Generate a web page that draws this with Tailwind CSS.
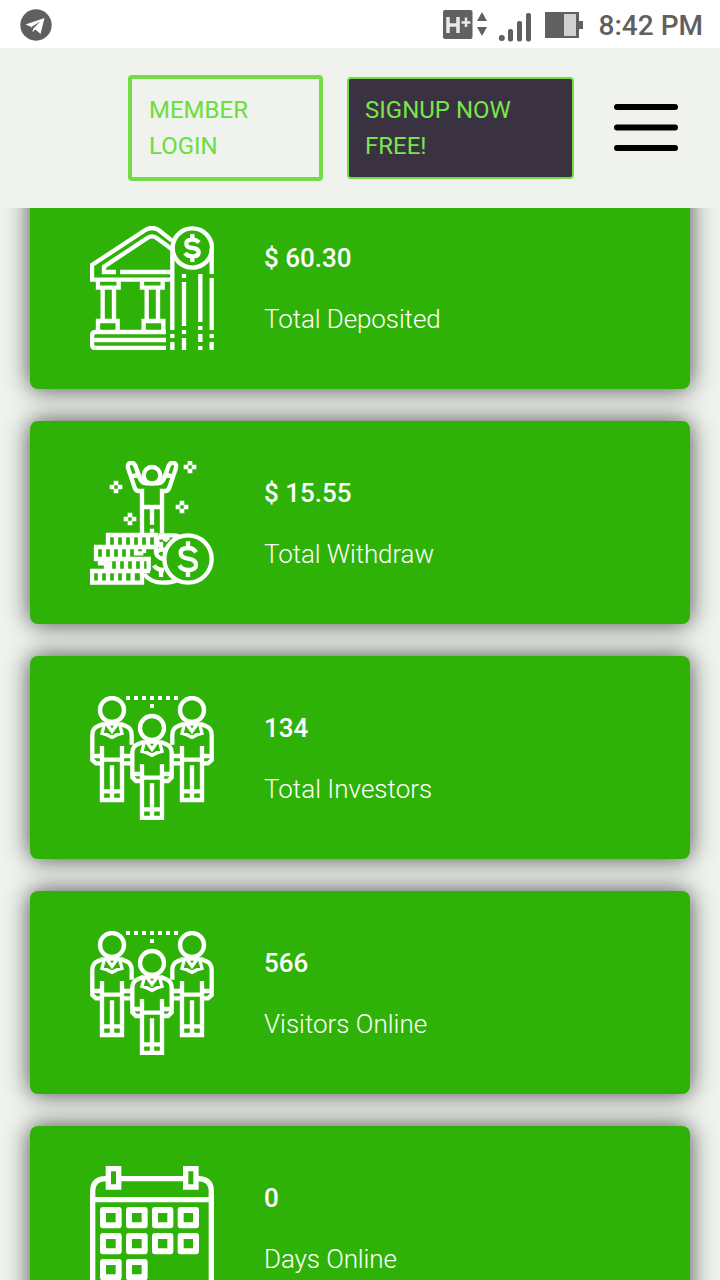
<!DOCTYPE html>
<html lang="en">
<head>
    <meta charset="UTF-8">
    <meta name="viewport" content="width=device-width, initial-scale=1.0">
    <title>Statistics</title>
    <script src="https://cdn.jsdelivr.net/npm/@tailwindcss/browser@4"></script>
</head>
<body class="bg-[#eff2ed] font-['Roboto',sans-serif] h-[1280px] overflow-hidden flex flex-col">
    <!-- Shared icon -->
    <svg class="hidden">
        <symbol id="people" viewBox="30 30 372 372">
            <g fill="none" stroke="#fff" stroke-width="13">
                <g>
                    <circle cx="96" cy="72" r="36"/>
                    <path d="M72 113 53 121Q37 128 37 146V222L48 232H66M120 113 139 121Q155 128 155 146V176M36 210H66M66 180V342H126V180M66 221H126M96 238V312M66 316H126M96 316V342M126 210H156M126 232H152"/>
                    <path stroke-width="10" d="M74 112 66 142 80 146 96 154 112 146 126 142 118 112M80 114 96 136 112 114Z"/>
                </g>
                <g>
                    <circle cx="336" cy="72" r="36"/>
                    <path d="M312 113 293 121Q277 128 277 146V176M360 113 379 121Q395 128 395 146V222L384 232H366M366 210H396M306 180V342H366V180M306 221H366M336 238V312M306 316H366M336 316V342M276 210H306M280 232H306"/>
                    <path stroke-width="10" d="M314 112 306 142 320 146 336 154 352 146 366 142 358 112M320 114 336 136 352 114Z"/>
                </g>
                <circle cx="216" cy="126" r="36"/>
                <path d="M192 167 173 175Q157 182 157 200V274L168 285H186M240 167 259 175Q275 182 275 200V274L264 285H246M157 264H186M246 264H275M186 234V396H246V234M186 275H246M216 292V366M186 370H246M216 370V396"/>
                <path stroke-width="10" d="M194 166 186 196 200 200 216 208 232 200 246 196 238 166M200 168 216 190 232 168Z"/>
            </g>
            <path d="M138 36H300" stroke="#fff" stroke-width="12" stroke-dasharray="12 12"/>
            <path d="M210 54h12v12h-12z" fill="#fff"/>
        </symbol>
    </svg>

    <!-- Status bar -->
    <div class="h-12 shrink-0 bg-white flex items-center pl-5 pr-[17px] relative z-20">
        <svg class="size-8 mt-0.5" viewBox="0 0 32 32">
            <circle cx="16" cy="16" r="15.7" fill="#5f5f5f"/>
            <path d="M5.500 15.500 24.500 9 20.500 25 15.500 20.500 12.500 23 11.500 18Z" fill="#fff"/>
            <path d="M11.500 18 20 12.500 13.500 19.500 12.500 23Z" fill="#5f5f5f"/>
        </svg>
        <svg class="ml-auto w-[142px] h-12" viewBox="0 0 142 48" fill="#606060">
            <rect x="0" y="10" width="29.500" height="29" rx="2"/>
            <path d="M5 17V33M15 17V33M5 25H15" stroke="#e9e9e9" stroke-width="3.500" fill="none"/>
            <path d="M23 17.500V27M18.500 22.500H27.500" stroke="#e9e9e9" stroke-width="2.500" fill="none"/>
            <path d="M39 12 44 21H34ZM34 27H44L39 36Z"/>
            <circle cx="58.800" cy="38" r="3"/>
            <rect x="65" y="29" width="5" height="12.500" rx="2"/>
            <rect x="74" y="21" width="5" height="20.500" rx="2"/>
            <rect x="83" y="13" width="5" height="28.500" rx="2"/>
            <path d="M102 12H136V21H140V29H136V38H102Z"/>
            <path d="M121 14H133V36H121Z" fill="#d0d0d0"/>
        </svg>
        <span class="ml-[14px] mt-1 text-[28px] leading-none font-medium text-[#606060] whitespace-nowrap">8:42 PM</span>
    </div>

    <!-- Header -->
    <header class="h-40 shrink-0 bg-[#eff2ed] flex items-center pl-32 pr-[42px] relative z-20">
        <a class="w-[195px] h-[106px] border-4 border-[#73dc45] rounded-[4px] px-[17px] pt-[13px] text-2xl leading-9 text-[#6ddd40]">MEMBER<br>LOGIN</a>
        <a class="ml-6 w-[227px] h-[102px] border-2 border-[#73dc45] rounded-[4px] bg-[#3a3240] px-4 pt-[13px] text-2xl leading-9 text-[#77e64b]">SIGNUP NOW<br>FREE!</a>
        <svg class="ml-auto w-16 h-[50px]" viewBox="0 0 64 50">
            <path d="M3 4H61M3 24.500H61M3 45H61" stroke="#000" stroke-width="6" stroke-linecap="round"/>
        </svg>
    </header>

    <!-- Stats -->
    <main class="-mt-[22px] px-[30px] flex flex-col gap-8">
        <section class="h-[203px] shrink-0 rounded-lg bg-[#2fb207] shadow-[0_0_24px_rgba(0,0,0,0.7)] pl-[60px] pt-10 flex gap-[50px] text-white">
            <svg class="size-[124px]" viewBox="30 30 372 372" fill="none" stroke="#fff" stroke-width="13">
                <path d="M276 74 236 42Q216 30 196 42L36 147V191H276M276 100 230 66Q216 56 202 66L72 152V168H108M120 168H276"/>
                <path d="M54 194V215H116V194M68 215V312M102 215V312M54 343V315H113V343M186 194V215H248V194M200 215V312M234 215V312M191 343V315H250V343"/>
                <path d="M258 348H46Q36 348 36 362V382Q36 396 46 396H258M40 372H258"/>
                <circle cx="337" cy="96" r="59"/>
                <path d="M357 80Q350 71 337 71 319 71 319 83 319 94 337 96 356 98 356 109 356 121 337 121 322 121 315 111M337 54V72M337 121V138"/>
                <path d="M277 98V342M277 354V366M277 378V402M395 98V174M395 186V342M395 354V366M395 378V402M312 174V186M312 198V330M312 342V354M312 366V402M361 174V318M361 330V342M361 354V378M361 390V402"/>
            </svg>
            <div class="text-[26px] leading-[30px] pt-[17px]">
                <div class="font-medium">$ 60.30</div>
                <div class="mt-[31px] font-light tracking-[-0.1px]">Total Deposited</div>
            </div>
        </section>

        <section class="h-[203px] shrink-0 rounded-lg bg-[#2fb207] shadow-[0_0_24px_rgba(0,0,0,0.7)] pl-[60px] pt-10 flex gap-[50px] text-white">
            <svg class="size-[124px]" viewBox="30 33 372 372" fill="none" stroke="#fff" stroke-width="13">
                <!-- figure -->
                <circle cx="216" cy="76" r="25"/>
                <path d="M186 250V123H174Q166 121 163 110L144 54Q142 42 150 39 161 36 166 47L181 88Q186 99 198 100H234Q246 99 251 88L266 47Q271 36 282 39 290 42 288 54L269 110Q266 121 258 123H246V250M155 80 172 74M260 74 277 80M186 171H246M216 171V224M216 236V248"/>
                <!-- sparkles -->
                <g stroke="none" fill="#fff">
                    <path id="spark" d="M323 32h14v14h-14zM323 56h14v14h-14zM311 44h14v14h-14zM335 44h14v14h-14z"/>
                    <use href="#spark" x="-222" y="60"/>
                    <use href="#spark" x="-24" y="120"/>
                    <use href="#spark" x="-180" y="156"/>
                </g>
                <!-- coins -->
                <circle cx="324" cy="327" r="71"/>
                <path d="M348 307Q340 294 324 294 302 294 302 309 302 323 324 326 348 329 348 345 348 360 324 360 306 360 298 346M324 274V294M324 360V381"/>
                <path d="M232 262V290M232 262H268Q258 264 254 274M236 256H275Q290 256 300 260M192 372Q212 398 248 398 276 398 292 390M254 299Q232 297 229 311 230 322 252 328M222 346Q230 360 252 360M243 276V296M243 360V381"/>
                <path d="M228 291V255H84V291M42 291H228V310M48 291V327H206V363M78 328V362M36 363V398H186V363M30 363H210"/>
                <path d="M108 255V291M132 255V291M156 255V291M180 255V291M204 255V291M72 291V327M96 291V327M120 291V327M144 291V327M168 291V310H190M192 291V309M60 327V340H90V362M114 327V363M138 327V363M162 327V363M186 327V363M60 363V399M84 363V399M108 363V399M132 363V399M158 363V399"/>
            </svg>
            <div class="text-[26px] leading-[30px] pt-[17px]">
                <div class="font-medium">$ 15.55</div>
                <div class="mt-[31px] font-light tracking-[-0.1px]">Total Withdraw</div>
            </div>
        </section>

        <section class="h-[203px] shrink-0 rounded-lg bg-[#2fb207] shadow-[0_0_24px_rgba(0,0,0,0.7)] pl-[60px] pt-10 flex gap-[50px] text-white">
            <svg class="size-[124px]"><use href="#people"/></svg>
            <div class="text-[26px] leading-[30px] pt-[17px]">
                <div class="font-medium">134</div>
                <div class="mt-[31px] font-light">Total Investors</div>
            </div>
        </section>

        <section class="h-[203px] shrink-0 rounded-lg bg-[#2fb207] shadow-[0_0_24px_rgba(0,0,0,0.7)] pl-[60px] pt-10 flex gap-[50px] text-white">
            <svg class="size-[124px]"><use href="#people"/></svg>
            <div class="text-[26px] leading-[30px] pt-[17px]">
                <div class="font-medium">566</div>
                <div class="mt-[31px] font-light">Visitors Online</div>
            </div>
        </section>

        <section class="h-[203px] shrink-0 rounded-lg bg-[#2fb207] shadow-[0_0_24px_rgba(0,0,0,0.7)] pl-[60px] pt-10 flex gap-[50px] text-white">
            <svg class="size-[124px]" viewBox="30 33 372 372" fill="none" stroke="#fff" stroke-width="16">
                <path d="M78 71Q38 71 38 110V397H394V110Q394 71 354 71M122 71H310M38 134H394"/>
                <path d="M85 41H116V96H85ZM317 41H348V96H317Z"/>
                <path stroke-width="18" stroke-linejoin="round" d="M69 165H116V211H69ZM147 165H194V211H147ZM225 165H271V211H225ZM302 165H348V211H302ZM69 243H116V289H69ZM147 243H194V289H147ZM225 243H271V289H225ZM302 243H348V289H302ZM69 321H116V367H69ZM147 321H194V367H147Z"/>
            </svg>
            <div class="text-[26px] leading-[30px] pt-[17px]">
                <div class="font-medium">0</div>
                <div class="mt-[31px] font-light tracking-[-0.1px]">Days Online</div>
            </div>
        </section>
    </main>
</body>
</html>
